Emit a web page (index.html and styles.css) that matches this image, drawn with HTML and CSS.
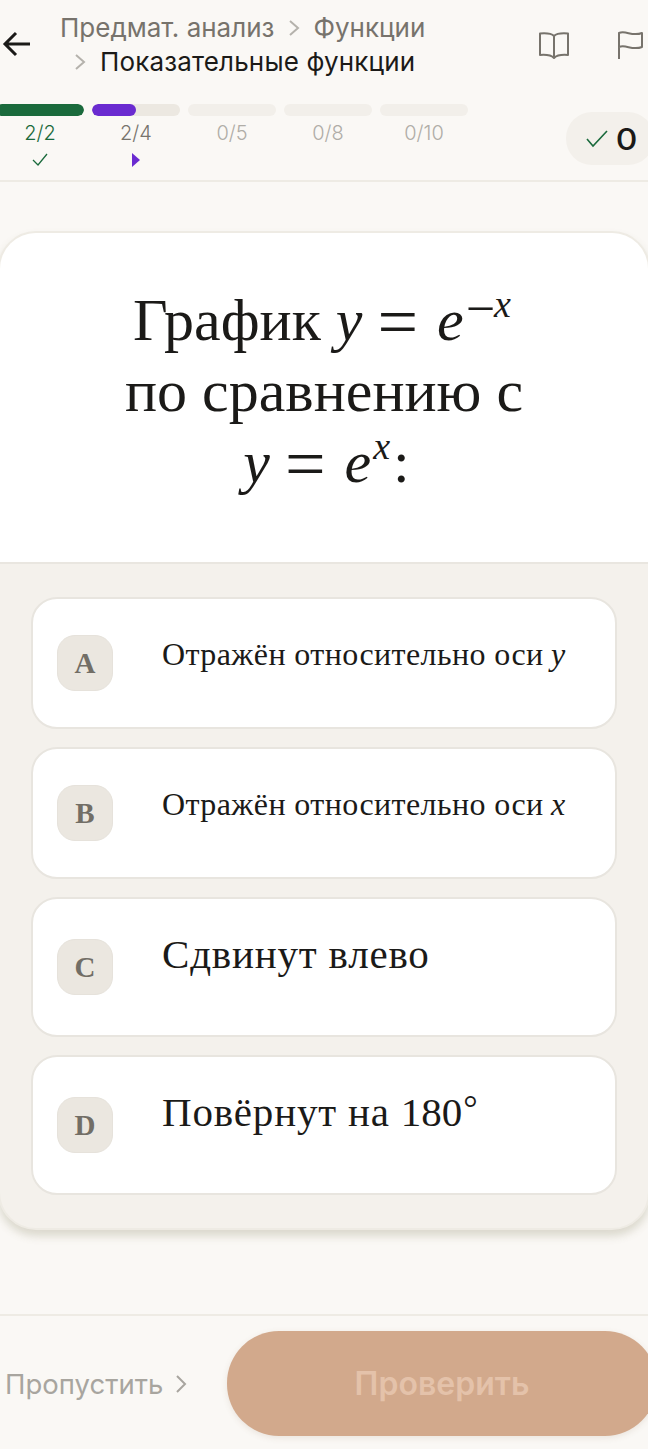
FILE: index.html
```html
<!DOCTYPE html>
<html lang="ru">
<head>
<meta charset="utf-8">
<title>Показательные функции</title>
<link rel="stylesheet" href="styles.css">
</head>
<body>
<div class="page">
  <header class="top">
    <div class="nav">
      <svg class="back" viewBox="0 0 30 28" width="30" height="28"><path d="M28 14H3M14 3L3 14l11 11" fill="none" stroke="#1b1a18" stroke-width="3"/></svg>
      <div class="crumbs">
        <div class="crumb-line muted">Предмат. анализ
          <svg class="chev" viewBox="0 0 12 18" width="12" height="18"><path d="M2 2l8 7-8 7" fill="none" stroke="#b5b2ac" stroke-width="2"/></svg>
          Функции</div>
        <div class="crumb-line second">
          <svg class="chev" viewBox="0 0 12 18" width="12" height="18"><path d="M2 2l8 7-8 7" fill="none" stroke="#b5b2ac" stroke-width="2"/></svg>
          <span class="current">Показательные функции</span></div>
      </div>
      <svg class="book" viewBox="0 0 32 30" width="32" height="30"><path d="M16 6C13 3 8 3 2 3.500V25C8 24.500 13 25 16 28C19 25 24 24.500 30 25V3.500C24 3 19 3 16 6ZM16 6V28" fill="none" stroke="#77736c" stroke-width="2" stroke-linejoin="round"/></svg>
      <svg class="flag" viewBox="0 0 26 30" width="26" height="30"><path d="M2 29V3C9 0 15 7 25 3V17C15 21 9 14 2 17" fill="none" stroke="#77736c" stroke-width="2" stroke-linejoin="round"/></svg>
    </div>
    <div class="progress">
      <div class="steps">
        <div class="step first">
          <div class="bar"><div class="fill green full"></div></div>
          <div class="count done">2/2</div>
          <svg class="mark" viewBox="0 0 16 14" width="16" height="14"><path d="M1 7l5 5 9-11" fill="none" stroke="#1a6a3c" stroke-width="1.300"/></svg>
        </div>
        <div class="step">
          <div class="bar"><div class="fill purple half"></div></div>
          <div class="count active">2/4</div>
          <svg class="mark" viewBox="0 0 16 14" width="16" height="14"><path d="M4 0l8 7-8 7z" fill="#6a2bd0"/></svg>
        </div>
        <div class="step"><div class="bar pale"></div><div class="count">0/5</div></div>
        <div class="step"><div class="bar pale"></div><div class="count">0/8</div></div>
        <div class="step"><div class="bar pale"></div><div class="count">0/10</div></div>
      </div>
      <div class="score">
        <svg viewBox="0 0 22 18" width="22" height="18"><path d="M1 9l6 7L21 1" fill="none" stroke="#1a6a3c" stroke-width="1.600"/></svg>
        <span class="score-num">0</span>
      </div>
    </div>
  </header>

  <main class="card">
    <section class="question">
      <div class="line-one">График <i class="var">y</i><span class="op">=</span><i class="var">e</i><sup><span class="minus">−</span><i>x</i></sup></div>
      <div>по сравнению с</div>
      <div class="line-three"><i class="var">y</i><span class="op">=</span><i class="var">e</i><sup><i>x</i></sup><span class="colon">:</span></div>
    </section>
    <section class="answers">
      <div class="option short">
        <div class="badge">A</div>
        <div class="text small">Отражён относительно оси <i class="inline-var">y</i></div>
      </div>
      <div class="option short">
        <div class="badge">B</div>
        <div class="text small">Отражён относительно оси <i class="inline-var">x</i></div>
      </div>
      <div class="option tall">
        <div class="badge">C</div>
        <div class="text">Сдвинут влево</div>
      </div>
      <div class="option tall">
        <div class="badge">D</div>
        <div class="text">Повёрнут на <span class="num">180</span><span class="deg">°</span></div>
      </div>
    </section>
  </main>

  <footer class="bottom">
    <div class="skip">Пропустить
      <svg viewBox="0 0 12 20" width="12" height="20"><path d="M2 2l8 8-8 8" fill="none" stroke="#a8a59f" stroke-width="2"/></svg>
    </div>
    <div class="check">Проверить</div>
  </footer>
</div>
</body>
</html>
```
FILE: styles.css
```css
* { box-sizing: border-box; }
html, body { margin: 0; padding: 0; }
body {
  background: #faf8f5;
  font-family: "Inter", "Liberation Sans", sans-serif;
  color: #1b1a18;
  overflow: hidden;
}
.page { width: 648px; height: 1449px; overflow: hidden; display: flex; flex-direction: column; }

.top { height: 182px; border-bottom: 2px solid #eeebe4; }
.nav { height: 104px; display: flex; align-items: flex-start; padding: 11px 0 0 2px; }
.back { margin-top: 19px; flex: none; }
.crumbs { width: 468px; margin-left: 28px; font-size: 26px; line-height: 34px; flex: none; }
.crumb-line { display: flex; align-items: center; gap: 14px; white-space: nowrap; }
.crumb-line.muted { gap: 13.500px; }
.muted { color: #77736c; }
.second { padding-left: 14px; gap: 14px; }
.current { color: #1b1a18; letter-spacing: .15px; }
.book { margin: 19px 0 0 10px; flex: none; }
.flag { margin: 19px 0 0 47px; flex: none; }

.progress { display: flex; justify-content: space-between; align-items: flex-start; }
.steps { display: flex; gap: 8px; margin-left: -4px; }
.step { width: 88px; display: flex; flex-direction: column; align-items: center; }
.bar { width: 88px; height: 12px; border-radius: 6px; background: #ece8e1; overflow: hidden; }
.bar.pale { background: #f2efea; }
.fill { height: 12px; border-radius: 6px; }
.green { background: #1a6a3c; }
.purple { background: #6a2bd0; }
.full { width: 100%; }
.half { width: 50%; }
.count { margin-top: 5px; font-size: 20px; line-height: 24px; color: #b0ada7; font-weight: 300; }
.count.done { color: #1a6a3c; }
.count.active { color: #77736c; }
.mark { margin-top: 8px; }
.score {
  margin: 8px -6px 0 0;
  width: 88px;
  height: 53px;
  border-radius: 26px;
  background: #f3f0eb;
  display: flex;
  align-items: center;
  gap: 9px;
  padding-left: 20px;
}
.score-num { font-size: 30px; font-weight: 500; transform: scaleX(1.12); }

.card {
  margin: 49px -2px 0;
  height: 999px;
  flex: none;
  border-radius: 38px;
  background: #f4f1ec;
  border: 2px solid #eeebe4;
  box-shadow: 0 6px 8px rgba(120, 115, 80, .24);
  overflow: hidden;
}
.question {
  background: #fff;
  height: 331px;
  border-bottom: 2px solid #e9e6e0;
  padding-top: 52px;
  text-align: center;
  font-family: "Liberation Serif", serif;
  font-size: 60px;
  line-height: 71px;
  color: #1b1a18;
}
.line-one { padding-right: 4px; }
.line-three { padding-left: 5px; }
.question sup { font-size: 38px; line-height: 0; vertical-align: 23px; margin-left: 2px; }
.minus { font-size: 52px; line-height: 0; vertical-align: -9px; margin-right: -1px; }
.op { font-size: 72px; line-height: 0; vertical-align: -6px; margin: 0 19px 0 15px; }
.var { line-height: 0; }
.colon { margin-left: 3px; }

.answers { padding: 33px 31px 0; display: flex; flex-direction: column; gap: 18px; }
.option {
  background: #fff;
  border: 2px solid #e8e5df;
  border-radius: 26px;
  display: flex;
  align-items: center;
  padding-left: 24px;
  font-family: "Liberation Serif", serif;
}
.short { height: 132px; }
.tall { height: 140px; }
.badge {
  width: 56px;
  height: 56px;
  flex: none;
  border-radius: 18px;
  background: #ebe7e0;
  border: 1px solid #e6e2db;
  color: #726e66;
  font-weight: 700;
  font-size: 29px;
  display: flex;
  align-items: center;
  justify-content: center;
}
.text { margin-left: 49px; white-space: nowrap; font-size: 41px; line-height: 46px; padding-bottom: 26px; color: #1b1a18; letter-spacing: .8px; }
.text.small { font-size: 32px; line-height: 38px; padding-bottom: 18px; letter-spacing: .4px; }
.inline-var { margin-left: -1px; }
.num { letter-spacing: 0; }
.deg { font-size: 36px; line-height: 0; vertical-align: 6px; letter-spacing: 0; margin-left: 1px; }

.bottom {
  margin-top: 84px;
  border-top: 2px solid #eeebe4;
  padding: 15px 0 0 5px;
  display: flex;
  align-items: flex-start;
}
.skip {
  width: 222px;
  height: 105px;
  flex: none;
  display: flex;
  align-items: center;
  gap: 12px;
  font-size: 27.500px;
  color: #a8a59f;
}
.check {
  width: 430px;
  height: 105px;
  flex: none;
  border-radius: 52px;
  background: #d2a98c;
  box-shadow: 0 2px 6px rgba(120, 90, 60, .12);
  color: #e4c2aa;
  font-size: 32px;
  font-weight: 600;
  display: flex;
  align-items: center;
  justify-content: center;
}
```
